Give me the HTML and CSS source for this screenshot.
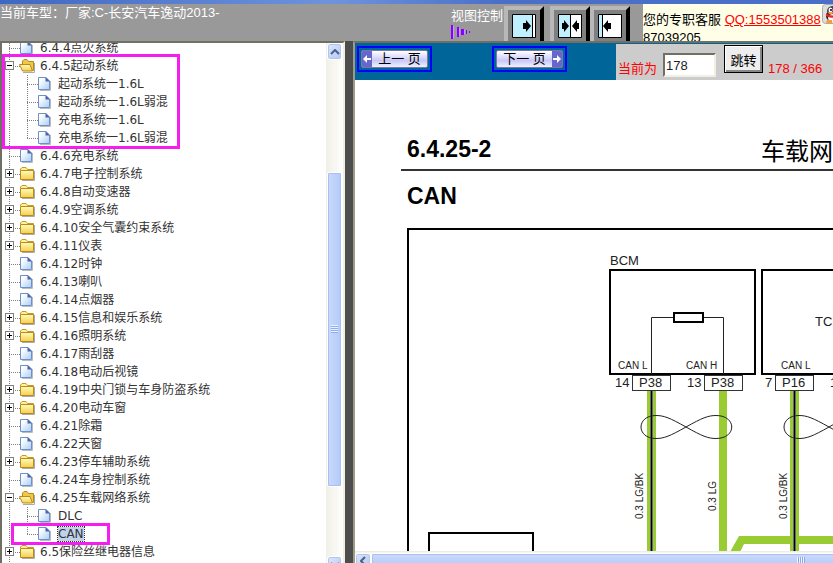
FILE: index.html
```html
<!DOCTYPE html>
<html lang="zh-CN">
<head>
    <meta charset="UTF-8">
    <title>长安汽车逸动2013 - 车载网络系统</title>
    <link rel="stylesheet" href="styles.css">
</head>
<body>
    <!-- 图标定义 -->
    <svg class="defs" width="0" height="0">
        <defs>
            <linearGradient id="paper" x1="0" y1="0" x2="1" y2="1">
                <stop offset="0.2" stop-color="#fff"/>
                <stop offset="1" stop-color="#a9cdf6"/>
            </linearGradient>
            <linearGradient id="yellow" x1="0" y1="0" x2="0" y2="1">
                <stop offset="0" stop-color="#fffbb8"/>
                <stop offset="1" stop-color="#f3cf52"/>
            </linearGradient>
        </defs>
        <symbol id="page" viewBox="0 0 18 18">
            <path d="M4 15.5H14.5V6" fill="none" stroke="#bbb"/>
            <path d="M2.5 2.5H10L13.5 6V14.5H2.5Z" fill="url(#paper)" stroke="#6f8fc8"/>
            <path d="M9.5 2V6.5H14Z" fill="#4d62a8"/>
        </symbol>
        <symbol id="folder" viewBox="0 0 18 18">
            <path d="M4 15.5H16.5V6" fill="none" stroke="#aaa"/>
            <path d="M2.5 5V4L4 2.5H8L9.5 4.5H15.5V6" fill="#fff3a0" stroke="#c89a20"/>
            <path d="M2.5 5.5H15.5V14.5H2.5Z" fill="url(#yellow)" stroke="#b98a1c"/>
        </symbol>
        <symbol id="folder-open" viewBox="0 0 18 18">
            <path d="M5 15.5H16.5V6" fill="none" stroke="#aaa"/>
            <path d="M4.5 13V4L6 2.5H9L10.5 4.5H15.5V13.5Z" fill="#f0c848" stroke="#b98a1c"/>
            <path d="M1.5 7.5H12L14.5 14H4.5Z" fill="url(#yellow)" stroke="#b98a1c"/>
        </symbol>
    </svg>

    <div class="window-edge"></div>

    <header class="top">
        <div class="model">当前车型：厂家:C-长安汽车逸动2013-</div>
        <div class="view-label">视图控制
            <svg width="20" height="14" viewBox="0 0 20 14">
                <path d="M0 0H2V14H0ZM6 2H8V12H6ZM10 4H13V10H10ZM15 5H16V9H15ZM18 6H19V8H18Z" fill="#80f"/>
                <path d="M2 1H3V13H2ZM8 3H9V11H8ZM13 5H14V9H13Z" fill="#c9f"/>
            </svg>
        </div>
        <div class="view-buttons">
            <button type="button" class="view-btn" aria-label="展开目录">
                <svg width="24" height="24" viewBox="0 0 24 24">
                    <path d="M.5.5H23.5V23.5H.5Z" fill="#c0f0ff" stroke="#000"/>
                    <path d="M20 1H23V23H20Z" fill="#fff"/>
                    <path d="M20.5 1V23" stroke="#000"/>
                    <path d="M11 9H14V6L19 12L14 18V15H11Z"/>
                </svg>
            </button>
            <button type="button" class="view-btn" aria-label="左右均分">
                <svg width="24" height="24" viewBox="0 0 24 24">
                    <path d="M.5.5H23.5V23.5H.5Z" fill="#fff" stroke="#000"/>
                    <path d="M1 1H12V23H1Z" fill="#c0f0ff"/>
                    <path d="M12.5 1V23" stroke="#000"/>
                    <path d="M4 9H6V6L11 12L6 18V15H4ZM21 9H19V6L14 12L19 18V15H21Z"/>
                </svg>
            </button>
            <button type="button" class="view-btn" aria-label="隐藏目录">
                <svg width="24" height="24" viewBox="0 0 24 24">
                    <path d="M.5.5H23.5V23.5H.5Z" fill="#fff" stroke="#000"/>
                    <path d="M1 1H4V23H1Z" fill="#c0f0ff"/>
                    <path d="M4.5 1V23" stroke="#000"/>
                    <path d="M13 9H10V6L5 12L10 18V15H13Z"/>
                </svg>
            </button>
        </div>
        <div class="contact">
            <span>您的专职客服</span>
            <a href="#">QQ:1553501388</a>
            <svg class="qq" width="22" height="20" viewBox="0 0 22 20">
                <rect x=".5" y=".5" width="24" height="19" rx="3" fill="#ddd" stroke="#aaa"/>
                <ellipse cx="11" cy="12" rx="7" ry="6" fill="#222"/>
                <ellipse cx="11" cy="7" rx="6" ry="5" fill="#345"/>
                <ellipse cx="11" cy="14" rx="5" ry="4" fill="#fff"/>
                <ellipse cx="8.5" cy="6" rx="2" ry="2.5" fill="#fff"/>
                <circle cx="9" cy="6" r="1"/>
                <path d="M4 9Q10 14 18 9V11Q10 16 4 12Z" fill="#e22"/>
                <path d="M5 16H10V19H4ZM12 16H18V19H12ZM6 8H12L10 10H7Z" fill="#f93"/>
            </svg>
            <div>87039205</div>
        </div>
    </header>

    <main class="frames">
        <!-- 左侧目录 -->
        <nav class="tree-frame">
            <ul class="tree">
                <li><div class="row"><svg><use href="#page"/></svg><a href="#">6.4.4点火系统</a></div></li>
                <li class="marked">
                    <div class="row"><button type="button" class="minus" aria-label="收起"></button><svg><use href="#folder-open"/></svg><a href="#">6.4.5起动系统</a></div>
                    <ul>
                        <li><div class="row"><svg><use href="#page"/></svg><a href="#">起动系统一1.6L</a></div></li>
                        <li><div class="row"><svg><use href="#page"/></svg><a href="#">起动系统一1.6L弱混</a></div></li>
                        <li><div class="row"><svg><use href="#page"/></svg><a href="#">充电系统一1.6L</a></div></li>
                        <li><div class="row"><svg><use href="#page"/></svg><a href="#">充电系统一1.6L弱混</a></div></li>
                    </ul>
                </li>
                <li><div class="row"><svg><use href="#page"/></svg><a href="#">6.4.6充电系统</a></div></li>
                <li><div class="row"><button type="button" class="plus" aria-label="展开"></button><svg><use href="#folder"/></svg><a href="#">6.4.7电子控制系统</a></div></li>
                <li><div class="row"><button type="button" class="plus" aria-label="展开"></button><svg><use href="#folder"/></svg><a href="#">6.4.8自动变速器</a></div></li>
                <li><div class="row"><button type="button" class="plus" aria-label="展开"></button><svg><use href="#folder"/></svg><a href="#">6.4.9空调系统</a></div></li>
                <li><div class="row"><button type="button" class="plus" aria-label="展开"></button><svg><use href="#folder"/></svg><a href="#">6.4.10安全气囊约束系统</a></div></li>
                <li><div class="row"><button type="button" class="plus" aria-label="展开"></button><svg><use href="#folder"/></svg><a href="#">6.4.11仪表</a></div></li>
                <li><div class="row"><svg><use href="#page"/></svg><a href="#">6.4.12时钟</a></div></li>
                <li><div class="row"><svg><use href="#page"/></svg><a href="#">6.4.13喇叭</a></div></li>
                <li><div class="row"><svg><use href="#page"/></svg><a href="#">6.4.14点烟器</a></div></li>
                <li><div class="row"><button type="button" class="plus" aria-label="展开"></button><svg><use href="#folder"/></svg><a href="#">6.4.15信息和娱乐系统</a></div></li>
                <li><div class="row"><button type="button" class="plus" aria-label="展开"></button><svg><use href="#folder"/></svg><a href="#">6.4.16照明系统</a></div></li>
                <li><div class="row"><svg><use href="#page"/></svg><a href="#">6.4.17雨刮器</a></div></li>
                <li><div class="row"><svg><use href="#page"/></svg><a href="#">6.4.18电动后视镜</a></div></li>
                <li><div class="row"><button type="button" class="plus" aria-label="展开"></button><svg><use href="#folder"/></svg><a href="#">6.4.19中央门锁与车身防盗系统</a></div></li>
                <li><div class="row"><button type="button" class="plus" aria-label="展开"></button><svg><use href="#folder"/></svg><a href="#">6.4.20电动车窗</a></div></li>
                <li><div class="row"><svg><use href="#page"/></svg><a href="#">6.4.21除霜</a></div></li>
                <li><div class="row"><svg><use href="#page"/></svg><a href="#">6.4.22天窗</a></div></li>
                <li><div class="row"><button type="button" class="plus" aria-label="展开"></button><svg><use href="#folder"/></svg><a href="#">6.4.23停车辅助系统</a></div></li>
                <li><div class="row"><svg><use href="#page"/></svg><a href="#">6.4.24车身控制系统</a></div></li>
                <li>
                    <div class="row"><button type="button" class="minus" aria-label="收起"></button><svg><use href="#folder-open"/></svg><a href="#">6.4.25车载网络系统</a></div>
                    <ul>
                        <li><div class="row"><svg><use href="#page"/></svg><a href="#">DLC</a></div></li>
                        <li class="marked-leaf"><div class="row"><svg><use href="#page"/></svg><a href="#" class="selected">CAN</a></div></li>
                    </ul>
                </li>
                <li><div class="row"><button type="button" class="plus" aria-label="展开"></button><svg><use href="#folder"/></svg><a href="#">6.5保险丝继电器信息</a></div></li>
            </ul>
            <div class="vscroll">
                <div class="arrow"><svg width="10" height="6" viewBox="0 0 10 6"><path d="M1 5L5 1L9 5" fill="none" stroke="#4d6185" stroke-width="2"/></svg></div>
                <div class="space-before"></div>
                <div class="thumb"></div>
                <div class="space-after"></div>
                <div class="arrow"><svg width="10" height="6" viewBox="0 0 10 6"><path d="M1 1L5 5L9 1" fill="none" stroke="#4d6185" stroke-width="2"/></svg></div>
            </div>
        </nav>

        <div class="splitter"></div>

        <!-- 右侧文档 -->
        <section class="doc-frame">
            <div class="toolbar">
                <div class="page-nav">
                    <button type="button" class="nav-btn"><span class="face"><i class="tab"><svg width="8" height="8" viewBox="0 0 8 8"><path d="M0 4L4 0V3H8V5H4V8Z" fill="#fff"/></svg></i><b>上一 页</b></span></button>
                    <button type="button" class="nav-btn"><span class="face"><b>下一 页</b><i class="tab"><svg width="8" height="8" viewBox="0 0 8 8"><path d="M8 4L4 0V3H0V5H4V8Z" fill="#fff"/></svg></i></span></button>
                </div>
                <form class="pager">
                    <label for="page-no">当前为</label>
                    <input type="text" id="page-no" value="178">
                    <button type="button">跳转</button>
                    <span>178 / 366</span>
                </form>
            </div>
            <div class="viewport">
                <article class="page">
                    <div class="page-head">
                        <h2>6.4.25-2</h2>
                        <div class="chapter">车载网络系统</div>
                    </div>
                    <h2 class="page-title">CAN</h2>
                    <svg class="diagram" width="504" height="400" viewBox="407 228 504 400">
                        <rect x="408" y="229" width="502" height="600" fill="none" stroke="#000" stroke-width="2"/>

                        <!-- 导线 -->
                        <g fill="#9c3">
                            <path d="M647 391H656V640H647ZM719 391H727V640H719ZM790 391H799V640H790Z"/>
                            <path d="M739 536H910V544H744L740 552H730Z"/>
                        </g>
                        <path d="M651.5 391V640M794.5 391V640" stroke="#667" stroke-width="3"/>
                        <path d="M651.5 391V640M794.5 391V640" stroke="#000"/>

                        <!-- 双绞线 -->
                        <g fill="none" stroke="#222">
                            <path id="twist" d="M686 427C670 418 664 415.5 656 415.5C636 415.5 636 438.5 656 438.5C664 438.5 670 436 686 427C702 418 708 415.5 716 415.5C737 415.5 737 438.5 716 438.5C708 438.5 702 436 686 427Z"/>
                            <use href="#twist" x="143"/>
                        </g>

                        <!-- 模块 -->
                        <g fill="none" stroke="#000" stroke-width="2">
                            <rect x="610" y="270" width="145" height="104"/>
                            <rect x="762" y="270" width="145" height="104"/>
                            <rect x="674" y="313" width="29" height="9"/>
                            <rect x="429" y="533" width="104" height="200"/>
                        </g>
                        <path d="M651.5 374V317.5H673M704 317.5H723.5V374" fill="none" stroke="#222"/>
                        <g fill="#fff" stroke="#333">
                            <rect x="632.5" y="375.5" width="38" height="15"/>
                            <rect x="704.5" y="375.5" width="38" height="15"/>
                            <rect x="775.5" y="375.5" width="38" height="15"/>
                        </g>

                        <g class="label">
                            <text x="610" y="265">BCM</text>
                            <text x="815" y="326">TCM</text>
                            <text x="615" y="387">14</text>
                            <text x="639" y="387">P38</text>
                            <text x="687" y="387">13</text>
                            <text x="711" y="387">P38</text>
                            <text x="765" y="387">7</text>
                            <text x="782" y="387">P16</text>
                            <text x="830" y="387">15</text>
                        </g>
                        <g class="small-label">
                            <text x="618" y="369">CAN L</text>
                            <text x="686" y="369">CAN H</text>
                            <text x="781" y="369">CAN L</text>
                            <text transform="translate(643 519) rotate(-90)">0.3 LG/BK</text>
                            <text transform="translate(716 511) rotate(-90)">0.3 LG</text>
                            <text transform="translate(787 519) rotate(-90)">0.3 LG/BK</text>
                        </g>
                    </svg>
                </article>
            </div>
            <div class="hscroll">
                <div class="arrow"><svg width="6" height="10" viewBox="0 0 6 10"><path d="M5 1L1 5L5 9" fill="none" stroke="#4d6185" stroke-width="2"/></svg></div>
                <div class="thumb"></div>
            </div>
        </section>
    </main>
</body>
</html>
```
FILE: styles.css
```css
*, *::after {
    box-sizing: border-box;
}
body {
    margin: 0;
    height: 100vh;
    overflow: hidden;
    display: flex;
    flex-direction: column;
    background-color: #999;
    font-family: "Liberation Sans", "Noto Sans CJK SC", sans-serif;
    font-size: 13px;
}
button {
    font-family: inherit;
    cursor: pointer;
}
.defs {
    position: absolute;
}
.window-edge {
    flex: 0 0 4px;
    background: linear-gradient(90deg, #3f68c4, #6f93dc 40%, #4a6fc8 60%, #4a6fc8);
}

/* 顶部 */
.top {
    flex: 0 0 37px;
    display: flex;
    overflow: hidden;
    background-color: #999;
    color: #fff;
    line-height: 18px;
}
.model {
    flex: 1;
    white-space: nowrap;
}
.view-label {
    width: 53px;
    padding-top: 3px;
}
.view-label svg {
    display: block;
}
.view-buttons {
    display: flex;
    gap: 6px;
    padding-top: 2px;
    margin-right: 13px;
}
.view-btn {
    width: 40px;
    height: 40px;
    padding: 4px;
    border: 4px solid;
    border-color: #b8b8b8 #000 #000 #b8b8b8;
    background-color: #808080;
}
.view-btn:nth-child(3) {
    margin-left: -6px;
}
.view-btn svg {
    display: block;
}
.contact {
    flex: 0 0 190px;
    position: relative;
    overflow: hidden;
    white-space: nowrap;
    background-color: #ffffe8;
    color: #000;
    padding-top: 7px;
}
.contact a {
    color: #f00;
}
.qq {
    position: absolute;
    top: 0;
    right: -11px;
}

/* 框架 */
.frames {
    flex: 1;
    min-height: 0;
    display: flex;
}
.tree-frame {
    flex: 0 0 345px;
    display: flex;
    overflow: hidden;
    background-color: #fff;
    border: 2px solid #716f64;
    border-right-color: #f1efe2;
    border-bottom: 0;
}
.splitter {
    flex: 0 0 8px;
    background-color: #4d4d4d;
}
.doc-frame {
    flex: 1;
    min-width: 0;
    display: flex;
    flex-direction: column;
    overflow: hidden;
    background-color: #fff;
    border-top: 2px solid #716f64;
    border-left: 2px solid #9d9a88;
}

/* 目录树 */
.tree, .tree ul {
    list-style: none;
    margin: 0;
    padding: 0;
}
.tree {
    flex: 1;
    height: 558px;
    margin-top: -4px;
    font-family: "DejaVu Sans", "Noto Sans CJK SC", sans-serif;
    font-size: 12px;
    background: repeating-linear-gradient(#808080 0 1px, transparent 1px 2px) 7px 0 / 1px 100% no-repeat;
}
.tree ul {
    margin-left: 18px;
}
.tree ul li {
    background: repeating-linear-gradient(#808080 0 1px, transparent 1px 2px) 7px 0 / 1px 100% no-repeat;
}
.tree ul li:last-child {
    background-size: 1px 10px;
}
.row {
    display: flex;
    align-items: center;
    height: 18px;
    padding-left: 16px;
    position: relative;
    background: repeating-linear-gradient(90deg, #808080 0 1px, transparent 1px 2px) 7px 9px / 11px 1px no-repeat;
}
.row svg {
    width: 18px;
    height: 18px;
    margin-right: 4px;
}
.row a {
    color: #333;
    text-decoration: none;
    white-space: nowrap;
    line-height: 14px;
}
.row a.selected {
    background-color: #c0d2ec;
    outline: 1px dotted #333;
}
.plus, .minus {
    position: absolute;
    left: 3px;
    top: 4px;
    width: 9px;
    height: 9px;
    padding: 0;
    border: 1px solid #808080;
    background: linear-gradient(#000, #000) center / 5px 1px no-repeat #fff;
}
.plus {
    background: linear-gradient(#000, #000) center / 5px 1px no-repeat, linear-gradient(#000, #000) center / 1px 5px no-repeat #fff;
}
.marked, .marked-leaf {
    position: relative;
}
.marked::after, .marked-leaf::after {
    content: "";
    position: absolute;
    border: 3px solid #f51df0;
    pointer-events: none;
}
.marked::after {
    left: 0;
    top: -3px;
    width: 178px;
    height: 95px;
}
.marked-leaf::after {
    left: -9px;
    top: -2px;
    width: 99px;
    height: 22px;
}

/* 滚动条 */
.vscroll {
    flex: 0 0 17px;
    height: 530px;
    display: flex;
    flex-direction: column;
    background: linear-gradient(90deg, #f0efe8, #fefefb);
}
.arrow {
    flex: 0 0 17px;
    display: flex;
    align-items: center;
    justify-content: center;
    margin: 0 1px;
    border: 1px solid #fff;
    border-radius: 3px;
    background: linear-gradient(135deg, #dbe6ff, #b4c8f6);
    box-shadow: inset 0 0 0 1px #b2c5ee;
}
.space-before {
    flex: 112;
}
.thumb {
    border: 1px solid #fff;
    border-radius: 2px;
    box-shadow: inset 0 0 0 1px #a9bff0;
}
.vscroll .thumb {
    flex: 315;
    margin: 0 1px;
    background: repeating-linear-gradient(#eef4ff 0 1px, #8caaf0 1px 2px) center / 7px 8px no-repeat, linear-gradient(90deg, #cbdafe, #b3c9f8);
}
.space-after {
    flex: 69;
}
.hscroll {
    flex: 0 0 17px;
    display: flex;
    margin-bottom: -5px;
    border-top: 1px solid #eeede5;
    background-color: #f6f5ef;
}
.hscroll .arrow {
    flex-basis: 16px;
    margin: 1px 0 0;
}
.hscroll .thumb {
    flex: 0 0 860px;
    margin-top: 1px;
    background: repeating-linear-gradient(90deg, #eef4ff 0 1px, #8caaf0 1px 2px) center / 8px 7px no-repeat, linear-gradient(#cbdafe, #b3c9f8);
}

/* 工具栏 */
.toolbar {
    flex: 0 0 37px;
    display: flex;
    background-color: #069;
}
.page-nav {
    flex: 0 0 261px;
    display: flex;
    align-items: flex-start;
    gap: 60px;
    padding: 3px 2px;
}
.nav-btn {
    width: 75px;
    height: 26px;
    padding: 2px;
    border: 2px solid #00f;
    background-color: #069;
}
.face {
    display: flex;
    height: 18px;
    border: 1px solid #77a;
    border-radius: 2px;
    overflow: hidden;
    background: linear-gradient(#fff, #c8c8f8 60%, #f0f0ff);
}
.face b {
    flex: 1;
    font-size: 13px;
    font-weight: normal;
    line-height: 16px;
    color: #000;
}
.tab {
    flex: 0 0 10px;
    display: flex;
    align-items: center;
    justify-content: center;
    background-color: #66c;
}
.pager {
    flex: 1;
    display: flex;
    align-items: flex-end;
    padding: 0 2px 2px;
    background-color: #ccc;
    border-top: 1px solid #069;
    white-space: nowrap;
}
.pager label, .pager span {
    color: #f00;
    line-height: 18px;
}
.pager input {
    width: 53px;
    height: 24px;
    margin: 0 8px 1px 6px;
    padding: 0 1px;
    border: 2px solid;
    border-color: #716f64 #f1efe2 #f1efe2 #716f64;
    background-color: #fff;
    color: #222;
    font-family: inherit;
    font-size: 13px;
}
.pager button {
    width: 39px;
    height: 28px;
    margin: 0 5px 5px 0;
    padding: 0;
    border: 1px solid #000;
    box-shadow: inset 1px 1px #fff, inset -2px -2px #888;
    background-color: #eee;
    color: #000;
    font-size: 13px;
}

/* 文档页面 */
.viewport {
    flex: 1;
    min-height: 0;
    overflow: hidden;
}
.page {
    width: 510px;
    margin-left: 46px;
    padding-top: 54px;
    color: #000;
}
.page h2 {
    margin: 0;
    font-size: 23px;
    line-height: 30px;
}
.page-head {
    display: flex;
    justify-content: space-between;
    height: 37px;
    padding: 0 6px;
    border-bottom: 2px solid #333;
}
.chapter {
    font-size: 24px;
    line-height: 36px;
}
.page .page-title {
    padding: 10px 6px 17px;
}
.diagram {
    display: block;
    margin-left: 6px;
}
.label {
    font-size: 13px;
    fill: #222;
}
.small-label {
    font-size: 10px;
    fill: #222;
}
```
